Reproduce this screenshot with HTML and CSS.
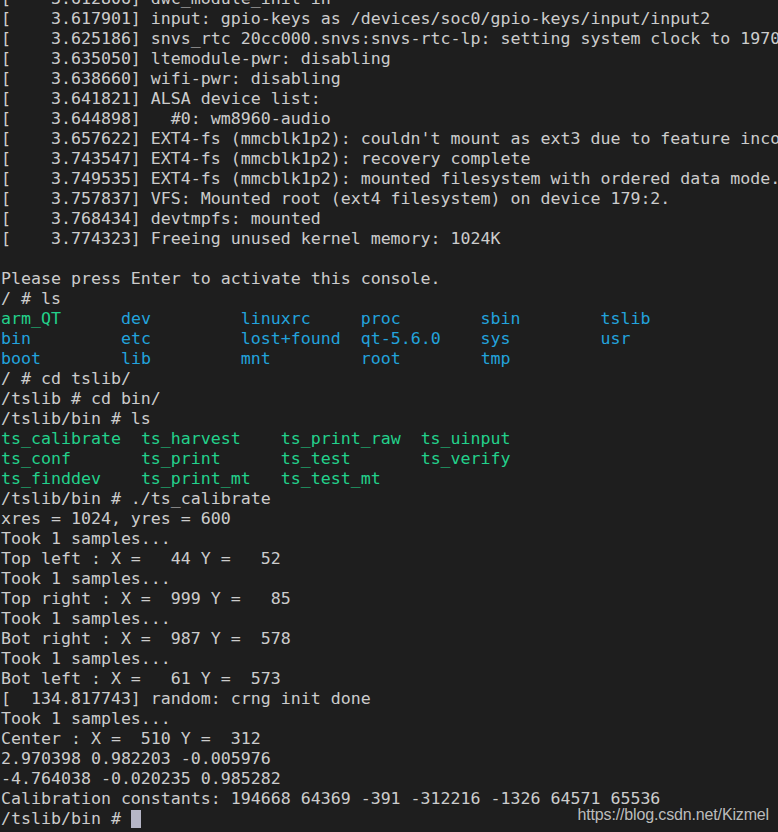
FILE: index.html
```html
<!DOCTYPE html>
<html>
<head>
<meta charset="utf-8">
<link rel="stylesheet" href="styles.css">
</head>
<body>
<div class="term">
<pre class="out">[    3.612806] dwc_module_init in
[    3.617901] input: gpio-keys as /devices/soc0/gpio-keys/input/input2
[    3.625186] snvs_rtc 20cc000.snvs:snvs-rtc-lp: setting system clock to 1970-01-01 00:00:00 UTC (0)
[    3.635050] ltemodule-pwr: disabling
[    3.638660] wifi-pwr: disabling
[    3.641821] ALSA device list:
[    3.644898]   #0: wm8960-audio
[    3.657622] EXT4-fs (mmcblk1p2): couldn't mount as ext3 due to feature incompatibilities
[    3.743547] EXT4-fs (mmcblk1p2): recovery complete
[    3.749535] EXT4-fs (mmcblk1p2): mounted filesystem with ordered data mode. Opts: (null)
[    3.757837] VFS: Mounted root (ext4 filesystem) on device 179:2.
[    3.768434] devtmpfs: mounted
[    3.774323] Freeing unused kernel memory: 1024K

Please press Enter to activate this console.
/ # ls
<span class="exe">arm_QT</span>      <span class="dir">dev</span>         <span class="dir">linuxrc</span>     <span class="dir">proc</span>        <span class="dir">sbin</span>        <span class="dir">tslib</span>
<span class="dir">bin</span>         <span class="dir">etc</span>         <span class="dir">lost+found</span>  <span class="dir">qt-5.6.0</span>    <span class="dir">sys</span>         <span class="dir">usr</span>
<span class="dir">boot</span>        <span class="dir">lib</span>         <span class="dir">mnt</span>         <span class="dir">root</span>        <span class="dir">tmp</span>
/ # cd tslib/
/tslib # cd bin/
/tslib/bin # ls
<span class="exe">ts_calibrate</span>  <span class="exe">ts_harvest</span>    <span class="exe">ts_print_raw</span>  <span class="exe">ts_uinput</span>
<span class="exe">ts_conf</span>       <span class="exe">ts_print</span>      <span class="exe">ts_test</span>       <span class="exe">ts_verify</span>
<span class="exe">ts_finddev</span>    <span class="exe">ts_print_mt</span>   <span class="exe">ts_test_mt</span>
/tslib/bin # ./ts_calibrate
xres = 1024, yres = 600
Took 1 samples...
Top left : X =   44 Y =   52
Took 1 samples...
Top right : X =  999 Y =   85
Took 1 samples...
Bot right : X =  987 Y =  578
Took 1 samples...
Bot left : X =   61 Y =  573
[  134.817743] random: crng init done
Took 1 samples...
Center : X =  510 Y =  312
2.970398 0.982203 -0.005976
-4.764038 -0.020235 0.985282
Calibration constants: 194668 64369 -391 -312216 -1326 64571 65536
/tslib/bin # <span class="cursor"></span></pre>
<div class="watermark">https://blog.csdn.net/Kizmel</div>
</div>
</body>
</html>
```

FILE: styles.css
```css
html, body {
  margin: 0;
  padding: 0;
  background: #1e1e1e;
}

.term {
  position: relative;
  width: 778px;
  height: 832px;
  overflow: hidden;
  display: flex;
  flex-direction: column;
  justify-content: flex-end;
  padding: 0 0 3px 1px;
  box-sizing: border-box;
  background: #1e1e1e;
}

.out {
  margin: 0;
  font-family: "DejaVu Sans Mono", monospace;
  font-size: 16.6px;
  line-height: 20px;
  color: #cccccc;
  white-space: pre;
}

.dir {
  color: #23a3dc;
}

.exe {
  color: #23d18b;
}

.cursor {
  display: inline-block;
  width: 10px;
  height: 18px;
  background: #b6b6c6;
  vertical-align: -4px;
}

.watermark {
  position: absolute;
  right: 9px;
  bottom: 8px;
  font-family: "Liberation Sans", Arial, sans-serif;
  font-size: 16px;
  letter-spacing: -0.15px;
  color: rgba(235, 235, 235, 0.8);
  text-shadow: 0 0 1px rgba(0, 0, 0, 0.6);
}
```
